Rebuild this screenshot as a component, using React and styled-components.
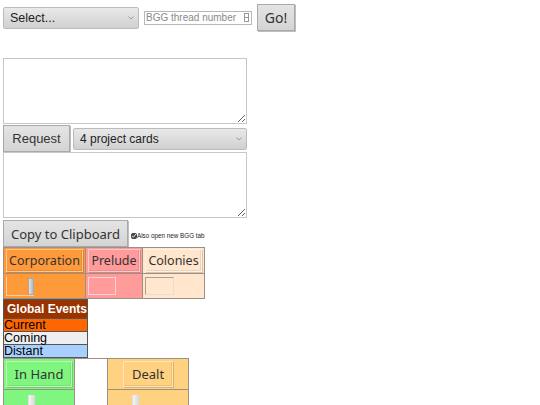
import React, { useState } from "react";
import styled, { createGlobalStyle } from "styled-components";

const GlobalStyle = createGlobalStyle`
  html, body {
    margin: 0;
    padding: 0;
    background: #fff;
  }
  body {
    font-family: "Liberation Sans", Arial, sans-serif;
  }
`;

const Page = styled.div`
  padding: 4px 3px 0 3px;
  display: flex;
  flex-direction: column;
  align-items: flex-start;
`;

const Row = styled.div`
  display: flex;
  align-items: center;
  gap: ${(p) => p.gap ?? 3}px;
  margin-top: ${(p) => p.mt || 0}px;
`;

const Spacer = styled.div`
  height: ${(p) => p.h}px;
`;

const Dropdown = styled.select`
  appearance: none;
  width: ${(p) => p.w}px;
  height: ${(p) => p.h}px;
  padding: 0 16px 0 6px;
  border: 1px solid #bcbcbc;
  border-radius: 2px;
  font-family: "Liberation Sans", Arial, sans-serif;
  font-size: ${(p) => p.fs}px;
  color: #222;
  background-image: url("data:image/svg+xml;utf8,<svg xmlns='http://www.w3.org/2000/svg' width='6' height='4'><path d='M0.5 0.5 L3 3 L5.5 0.5' fill='none' stroke='%23999' stroke-width='1'/></svg>"),
    linear-gradient(#e9e9e9, #d0d0d0);
  background-repeat: no-repeat, no-repeat;
  background-position: right 4px center, 0 0;
`;

const NumberInput = styled.input`
  width: 108px;
  height: 14px;
  box-sizing: border-box;
  border: 1px solid #b8b8b8;
  padding: 0 10px 0 1px;
  font-family: "Liberation Sans", Arial, sans-serif;
  font-size: 10px;
  color: #333;
  background: #fff;
  &::placeholder {
    color: #8a8a8a;
  }
`;

const SpinBox = styled.span`
  position: relative;
  display: inline-flex;
  align-items: center;
  margin: 0 5px;
`;

const Spin = styled.span`
  position: absolute;
  right: 3px;
  top: 2px;
  width: 5px;
  height: 9px;
  border: 1px solid #999;
  box-sizing: border-box;
  background: linear-gradient(#fff 45%, #999 45%, #999 55%, #fff 55%);
`;

const GrayButton = styled.button`
  width: ${(p) => p.w}px;
  height: ${(p) => p.h}px;
  padding: 0;
  border: 1px solid #a9a9a9;
  background: linear-gradient(#e4e4e4, #d4d4d4);
  color: #333;
  font-family: ${(p) => (p.arial ? '"Liberation Sans", Arial' : '"Noto Sans"')}, sans-serif;
  font-size: ${(p) => p.fs}px;
  box-shadow: 1px 1px 0 #bdbdbd;
`;

const TextBox = styled.textarea`
  width: 244px;
  height: 66px;
  box-sizing: border-box;
  margin: 0;
  border: 1px solid #c6c6c6;
  display: block;
`;

const CheckLabel = styled.label`
  display: flex;
  align-items: center;
  gap: 0;
  font-size: 6.3px;
  color: #222;
  margin: 4px 0 0 3px;
`;

const Check = styled.input`
  width: 6px;
  height: 6px;
  margin: 0;
  accent-color: #444;
`;

const Grid = styled.table`
  border-collapse: collapse;
  border: 1px solid #9b8f86;
`;

const Cell = styled.td`
  background: ${(p) => p.bg};
  border: 1px solid #9b8f86;
  padding: 1px 2px;
  height: ${(p) => p.h || 24}px;
  width: ${(p) => p.w}px;
  box-sizing: border-box;
  vertical-align: middle;
  text-align: ${(p) => p.align || "left"};
`;

const CellButton = styled.button`
  background: ${(p) => p.bg};
  border: 1px solid rgba(255, 255, 255, 0.45);
  box-shadow: 1px 1px 0 rgba(0, 0, 0, 0.15), inset -1px -1px 0 rgba(0, 0, 0, 0.08);
  font-family: "Noto Sans", sans-serif;
  font-size: ${(p) => p.fs || 12.5}px;
  color: #333;
  padding: 0;
  height: ${(p) => p.h || 23}px;
  width: ${(p) => p.w}px;
`;

const MiniSelect = styled.span`
  display: block;
  width: 28px;
  height: 19px;
  box-sizing: border-box;
  border-left: 1px solid rgba(255, 255, 255, 0.5);
  border-bottom: 1px solid rgba(255, 255, 255, 0.5);
  position: relative;
  &::after {
    content: "";
    position: absolute;
    right: 0;
    top: 1px;
    width: 4px;
    height: 15px;
    background: linear-gradient(90deg, #e4e4e4, #b8b8b8);
    border: 1px solid #a8a8a8;
  }
`;

const MiniInput = styled.span`
  display: block;
  width: ${(p) => p.w || 28}px;
  height: 18px;
  box-sizing: border-box;
  border: 1px solid ${(p) => p.line || "rgba(255,255,255,0.55)"};
  border-top-color: ${(p) => p.top || "rgba(255,255,255,0.55)"};
  border-left-color: ${(p) => p.top || "rgba(255,255,255,0.55)"};
`;

const Slider = styled.span`
  display: inline-block;
  width: 6px;
  height: 14px;
  margin-left: ${(p) => p.ml}px;
  background: linear-gradient(90deg, #f4f4f4, #d8d8d8);
  border-left: 1px solid #e0e0e0;
  vertical-align: bottom;
`;

const EventTable = styled.table`
  border-collapse: collapse;
  width: 85px;
  border: 1px solid #5a3a2a;
`;

const EventRow = styled.td`
  background: ${(p) => p.bg};
  color: ${(p) => p.fg || "#000"};
  font-weight: ${(p) => (p.bold ? "bold" : "normal")};
  font-size: ${(p) => (p.bold ? 12 : 12.5)}px;
  line-height: 12px;
  white-space: nowrap;
  height: ${(p) => p.h || 13}px;
  padding: 0 0 0 ${(p) => p.pl || 0}px;
  border: 1px solid #555;
  box-sizing: border-box;
`;

const EmptyCell = styled.td`
  background: #fff;
  width: 32px;
  border: 1px solid #9b8f86;
  padding: 0;
  vertical-align: bottom;
`;

const GreenEdge = styled.div`
  height: 2px;
  background: #7ff27f;
  margin-left: 2px;
`;

export default function App() {
  const [thread, setThread] = useState("");
  const [openTab, setOpenTab] = useState(true);

  return (
    <>
      <GlobalStyle />
      <Page>
        <Row gap={0}>
          <Dropdown w={136} h={22} fs={12.5}>
            <option>Select...</option>
          </Dropdown>
          <SpinBox>
            <NumberInput
              value={thread}
              placeholder="BGG thread number"
              onChange={(e) => setThread(e.target.value)}
            />
            <Spin />
          </SpinBox>
          <GrayButton w={38} h={27} fs={14}>
            Go!
          </GrayButton>
        </Row>
        <Spacer h={27} />
        <TextBox />
        <Row mt={1}>
          <GrayButton w={67} h={27} fs={13} arial>
            Request
          </GrayButton>
          <Dropdown w={174} h={22} fs={12}>
            <option>4 project cards</option>
          </Dropdown>
        </Row>
        <TextBox />
        <Row gap={0} mt={2}>
          <GrayButton w={125} h={27} fs={13}>
            Copy to Clipboard
          </GrayButton>
          <CheckLabel>
            <Check
              type="checkbox"
              checked={openTab}
              onChange={() => setOpenTab(!openTab)}
            />
            Also open new BGG tab
          </CheckLabel>
        </Row>

        <Grid>
          <tbody>
            <tr>
              <Cell bg="#ff9a3a" w={82}>
                <CellButton bg="#ff9a3a" w={77}>Corporation</CellButton>
              </Cell>
              <Cell bg="#ff9b9b" w={56}>
                <CellButton bg="#ff9b9b" w={52}>Prelude</CellButton>
              </Cell>
              <Cell bg="#ffe6cc" w={59}>
                <CellButton bg="#ffe6cc" w={57}>Colonies</CellButton>
              </Cell>
            </tr>
            <tr>
              <Cell bg="#ff9a3a" h={25}>
                <MiniSelect />
              </Cell>
              <Cell bg="#ff9b9b" h={25}>
                <MiniInput />
              </Cell>
              <Cell bg="#ffe6cc" h={25}>
                <MiniInput w={29} line="#e8ddd2" top="#a8a099" />
              </Cell>
            </tr>
          </tbody>
        </Grid>

        <EventTable>
          <tbody>
            <tr>
              <EventRow bg="#993300" fg="#fff" bold h={19} pl={3}>
                Global Events
              </EventRow>
            </tr>
            <tr>
              <EventRow bg="#ff6600">Current</EventRow>
            </tr>
            <tr>
              <EventRow bg="#eeeeee">Coming</EventRow>
            </tr>
            <tr>
              <EventRow bg="#a8d0ff">Distant</EventRow>
            </tr>
          </tbody>
        </EventTable>

        <Grid>
          <tbody>
            <tr>
              <Cell bg="#80f57f" w={70} h={31}>
                <CellButton bg="#80f57f" w={66} h={26} fs={13}>
                  In Hand
                </CellButton>
              </Cell>
              <EmptyCell rowSpan={2}>
                <GreenEdge />
              </EmptyCell>
              <Cell bg="#ffd282" w={81} h={31} align="center">
                <CellButton bg="#ffd282" w={50} h={26} fs={13}>
                  Dealt
                </CellButton>
              </Cell>
            </tr>
            <tr>
              <Cell bg="#80f57f" h={20}>
                <Slider ml={22} />
              </Cell>
              <Cell bg="#ffd282" h={20}>
                <Slider ml={22} />
              </Cell>
            </tr>
          </tbody>
        </Grid>
      </Page>
    </>
  );
}
